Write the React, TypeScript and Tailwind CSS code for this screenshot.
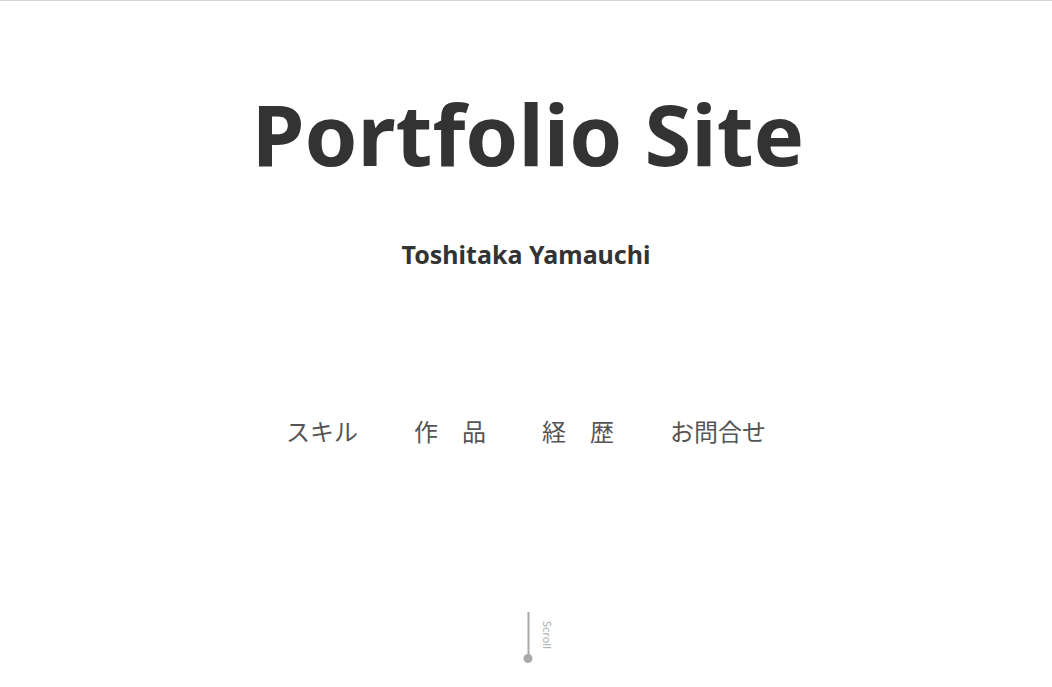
import React from 'react';

const navItems = ['スキル', '作　品', '経　歴', 'お問合せ'];

export default function App() {
  return (
    <div
      className="relative h-[687px] w-full overflow-hidden border-t border-[#d4d4d4] bg-white text-[#333]"
      style={{ fontFamily: '"Noto Sans", "Noto Sans CJK JP", sans-serif' }}
    >
      <header className="flex flex-col items-center">
        <h1 className="mt-[76px] pl-[4px] text-[85px] leading-[112px] font-bold">Portfolio Site</h1>
        <p className="mt-[49px] text-[25px] leading-[32px] font-bold">Toshitaka Yamauchi</p>
      </header>

      <nav className="mt-[145px] flex justify-center gap-[56px]">
        {navItems.map((item) => (
          <a
            key={item}
            href="#"
            className="text-[24px] leading-[32px] text-[#555]"
            style={{ fontFamily: '"Noto Sans CJK JP", sans-serif' }}
          >
            {item}
          </a>
        ))}
      </nav>

      <div className="absolute bottom-[24px] left-1/2 ml-[2px] flex -translate-x-1/2 flex-col items-center">
        <div className="h-[44px] w-[2px] bg-[#aaa]" />
        <div className="-mt-[2px] h-[9px] w-[9px] rounded-full bg-[#aaa]" />
        <span className="absolute top-[9px] left-[17px] origin-top-left translate-x-[12px] rotate-90 text-[11px] leading-[12px] text-[#aaa]">
          Scroll
        </span>
      </div>
    </div>
  );
}
